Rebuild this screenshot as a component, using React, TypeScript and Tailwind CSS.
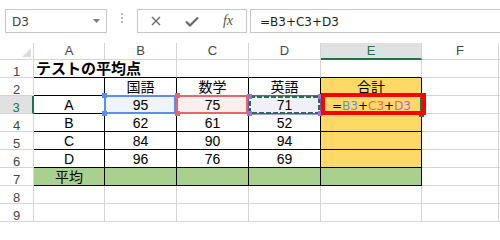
import React from "react";

const G = "border-r border-b border-[#d4d4d4]";
const K = "border-r border-b border-black";
const TXT = "text-[14px] leading-[16px] pt-[1px] text-center text-black whitespace-nowrap";
const RH = "border-r border-b border-[#d4d4d4] text-[13px] leading-[13px] pt-[5px] text-center text-[#444]";
const CH = "border-r border-b border-[#d4d4d4] text-[13px] leading-[13px] pt-[1px] text-center text-[#444]";

function Cell({ c, children }: { c: string; children?: React.ReactNode }) {
  return <div className={c}>{children}</div>;
}

const data: [string, string, string, string][] = [
  ["A", "95", "75", "71"],
  ["B", "62", "61", "52"],
  ["C", "84", "90", "94"],
  ["D", "96", "76", "69"],
];

export default function App() {
  return (
    <div className="w-[500px] h-[222px] overflow-hidden bg-white relative font-['Liberation_Sans','Noto_Sans_CJK_JP',sans-serif]">
      {/* toolbar */}
      <div className="h-[43px] flex items-start pt-[9px] pl-[5px] font-['DejaVu_Sans',sans-serif]">
        <div className="w-[102px] h-[24px] border border-[#c6c6c6] flex justify-between shrink-0">
          <div className="pl-[6px] pt-[5px] text-[12px] leading-[14px] text-[#404040]">D3</div>
          <div className="pr-[6px] pt-[9px]">
            <svg width="7" height="4" viewBox="0 0 7 4">
              <polygon points="0,0 7,0 3.5,4" fill="#7a7a7a" />
            </svg>
          </div>
        </div>
        <div className="ml-[14px] mt-[4px] flex flex-col gap-[2px] shrink-0">
          <div className="w-[2px] h-[2px] bg-[#b4b4b4]" />
          <div className="w-[2px] h-[2px] bg-[#b4b4b4]" />
          <div className="w-[2px] h-[2px] bg-[#b4b4b4]" />
        </div>
        <div className="ml-[14px] w-[110px] h-[24px] border border-[#c6c6c6] grid grid-cols-3 place-items-center shrink-0">
          <svg width="10" height="10" viewBox="0 0 10 10">
            <path d="M1 1 L9 9 M9 1 L1 9" stroke="#6a6a6a" strokeWidth="1.4" fill="none" />
          </svg>
          <svg width="14" height="11" viewBox="0 0 14 11">
            <polyline points="1,5.5 5,9.5 13,1.5" stroke="#6a6a6a" strokeWidth="2.2" fill="none" />
          </svg>
          <span className="font-['Liberation_Serif',serif] italic text-[14px] leading-[14px] text-[#555]">fx</span>
        </div>
        <div className="ml-[3px] w-[260px] h-[24px] border border-[#c6c6c6] shrink-0">
          <div className="pl-[9px] pt-[5px] text-[12px] leading-[14px] text-[#222]">=B3+C3+D3</div>
        </div>
      </div>

      {/* grid */}
      <div className="relative">
        <div className="grid grid-cols-[34px_71px_72px_72px_72px_101px_77px_1fr] grid-rows-[17px_repeat(9,18px)]">
          {/* header row */}
          <div className="border-r border-b border-[#d4d4d4] flex items-end justify-end pr-[1px] pb-[1px]">
            <svg width="10" height="10" viewBox="0 0 10 10">
              <polygon points="9,0 9,9 0,9" fill="#dcdcdc" />
            </svg>
          </div>
          <Cell c={CH}>A</Cell>
          <Cell c={CH}>B</Cell>
          <Cell c={CH}>C</Cell>
          <Cell c={CH}>D</Cell>
          <Cell c="bg-[#e1e1e1] border-r border-r-[#d4d4d4] border-b-2 border-b-[#217346] text-[13px] leading-[13px] pt-[1px] text-center text-[#217346]">E</Cell>
          <Cell c={CH}>F</Cell>
          <Cell c="border-b border-[#d4d4d4]" />

          {/* row 1 */}
          <Cell c={RH}>1</Cell>
          <Cell c="border-b border-black text-[15px] leading-[16px] pt-[1px] pl-[2px] font-bold text-black whitespace-nowrap">テストの平均点</Cell>
          <Cell c="border-r border-r-[#d4d4d4] border-b border-b-black" />
          <Cell c="border-r border-r-[#d4d4d4] border-b border-b-black" />
          <Cell c="border-r border-r-[#d4d4d4] border-b border-b-black" />
          <Cell c="border-r border-r-[#d4d4d4] border-b border-b-black" />
          <Cell c={G} />
          <Cell c="border-b border-[#d4d4d4]" />

          {/* row 2 */}
          <Cell c={RH}>2</Cell>
          <Cell c={K} />
          <Cell c={`${K} ${TXT}`}>国語</Cell>
          <Cell c={`${K} ${TXT}`}>数学</Cell>
          <Cell c={`${K} ${TXT}`}>英語</Cell>
          <Cell c={`${K} ${TXT} bg-[#ffd966]`}>合計</Cell>
          <Cell c={G} />
          <Cell c="border-b border-[#d4d4d4]" />

          {/* rows 3-6 */}
          {data.map((r, i) => (
            <React.Fragment key={r[0]}>
              {i === 0 ? (
                <Cell c="bg-[#e1e1e1] border-r-2 border-r-[#217346] border-b border-b-[#d4d4d4] text-[13px] leading-[13px] pt-[5px] text-center text-[#217346]">3</Cell>
              ) : (
                <Cell c={RH}>{String(i + 3)}</Cell>
              )}
              <Cell c={`${K} ${TXT}`}>{r[0]}</Cell>
              <Cell c={i === 0 ? `${K} ${TXT} bg-[#eef3fd]` : `${K} ${TXT}`}>{r[1]}</Cell>
              <Cell c={i === 0 ? `${K} ${TXT} bg-[#fdeeee]` : `${K} ${TXT}`}>{r[2]}</Cell>
              <Cell c={i === 0 ? `${K} ${TXT} bg-[#f2eff9]` : `${K} ${TXT}`}>{r[3]}</Cell>
              {i === 0 ? (
                <Cell c={`${K} bg-[#ffd966] pl-[11px] pt-[2px] text-[12px] leading-[16px] font-['DejaVu_Sans',sans-serif] text-black whitespace-nowrap`}>
                  =<span className="text-[#5a8de8]">B3</span>+<span className="text-[#ef6461]">C3</span>+<span className="text-[#9a6fd8]">D3</span>
                </Cell>
              ) : (
                <Cell c={`${K} bg-[#ffd966]`} />
              )}
              <Cell c={G} />
              <Cell c="border-b border-[#d4d4d4]" />
            </React.Fragment>
          ))}

          {/* row 7 */}
          <Cell c={RH}>7</Cell>
          <Cell c={`${K} ${TXT} bg-[#a9d08e]`}>平均</Cell>
          <Cell c={`${K} bg-[#a9d08e]`} />
          <Cell c={`${K} bg-[#a9d08e]`} />
          <Cell c={`${K} bg-[#a9d08e]`} />
          <Cell c={`${K} bg-[#a9d08e]`} />
          <Cell c={G} />
          <Cell c="border-b border-[#d4d4d4]" />

          {/* rows 8-9 */}
          <Cell c={RH}>8</Cell>
          <Cell c={G} />
          <Cell c={G} />
          <Cell c={G} />
          <Cell c={G} />
          <Cell c={G} />
          <Cell c={G} />
          <Cell c="border-b border-[#d4d4d4]" />
          <Cell c={RH}>9</Cell>
          <Cell c={G} />
          <Cell c={G} />
          <Cell c={G} />
          <Cell c={G} />
          <Cell c={G} />
          <Cell c={G} />
          <Cell c="border-b border-[#d4d4d4]" />
        </div>

        {/* selection overlays */}
        <div className="absolute inset-0 pointer-events-none">
          <div className="absolute left-[104px] top-[52px] w-[72px] h-[19px] border-2 border-[#5b8def]" />
          <div className="absolute left-[102px] top-[50px] w-[5px] h-[5px] bg-[#5b8def]" />
          <div className="absolute left-[102px] top-[68px] w-[5px] h-[5px] bg-[#5b8def]" />

          <div className="absolute left-[176px] top-[52px] w-[72px] h-[19px] border-2 border-[#e8666b]" />
          <div className="absolute left-[175px] top-[50px] w-[5px] h-[5px] bg-[#e8666b]" />
          <div className="absolute left-[175px] top-[68px] w-[5px] h-[5px] bg-[#e8666b]" />

          <svg className="absolute left-[247px] top-[52px]" width="75" height="20" viewBox="0 0 75 20">
            <rect x="1" y="1" width="73" height="18" fill="none" stroke="#9a72d9" strokeWidth="1.5" />
            <rect x="3" y="2" width="69" height="16" fill="none" stroke="#217346" strokeWidth="2" strokeDasharray="5 2" />
          </svg>
          <div className="absolute left-[247px] top-[51px] w-[5px] h-[5px] bg-[#9a72d9]" />
          <div className="absolute left-[247px] top-[68px] w-[5px] h-[5px] bg-[#9a72d9]" />
          <div className="absolute left-[318px] top-[51px] w-[5px] h-[5px] bg-[#9a72d9]" />
          <div className="absolute left-[318px] top-[68px] w-[5px] h-[5px] bg-[#9a72d9]" />

          <div className="absolute left-[420px] top-[54px] w-[2px] h-[17px] bg-[#217346]" />
          <div className="absolute left-[419px] top-[69px] w-[5px] h-[5px] bg-[#217346]" />
          <div className="absolute left-[321px] top-[50px] w-[105px] h-[22px] border-4 border-[#ff0000]" />
        </div>
      </div>
    </div>
  );
}
